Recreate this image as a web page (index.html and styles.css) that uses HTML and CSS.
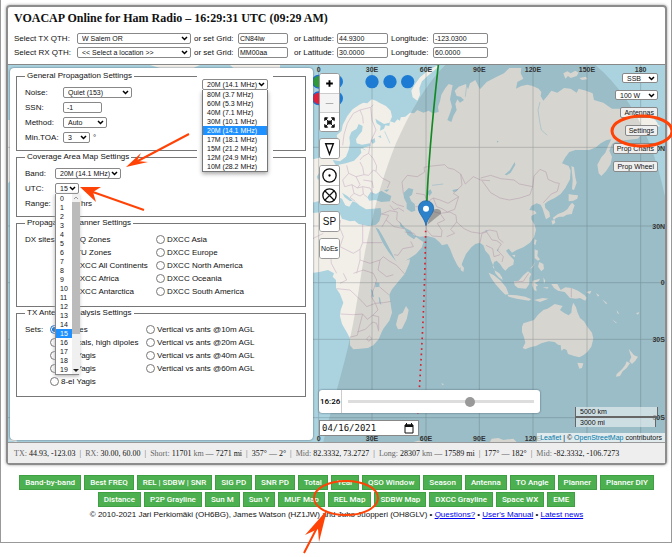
FILE: index.html
```html
<!DOCTYPE html>
<html lang="en">
<head>
<meta charset="utf-8">
<title>VOACAP Online for Ham Radio</title>
<link rel="stylesheet" href="styles.css">
</head>
<body>
<div class="page">
  <main class="window">
    <header class="head">
      <h1>VOACAP Online for Ham Radio – 16:29:31 UTC (09:29 AM)</h1>
      <form class="sites">
        <label for="tx">Select TX QTH:</label>
        <select id="tx"><option>W Salem OR</option></select>
        <label for="txg">or set Grid:</label>
        <input id="txg" value="CN84lw">
        <label class="end" for="txlat">or Latitude:</label>
        <input id="txlat" value="44.9300">
        <label for="txlon">Longitude:</label>
        <input id="txlon" value="-123.0300">
        <label for="rx">Select RX QTH:</label>
        <select id="rx"><option>&lt;&lt; Select a location &gt;&gt;</option></select>
        <label for="rxg">or set Grid:</label>
        <input id="rxg" value="MM00aa">
        <label class="end" for="rxlat">or Latitude:</label>
        <input id="rxlat" value="30.0000">
        <label for="rxlon">Longitude:</label>
        <input id="rxlon" value="60.0000">
      </form>
    </header>

    <section class="stage">
      <svg class="map" viewBox="-906 15 1971 1131" preserveAspectRatio="xMaxYMin slice" aria-hidden="true">
        <rect x="-906" y="15" width="1971" height="1131" fill="#aad3df"/>
        <!-- land -->
        <g fill="#f2efe9">
          <path d="M0 430V300L40 290 62 270 66 255 84 240 80 226 95 212 98 195 112 168 128 148 148 134 160 128 172 130 185 118 198 122 208 128 228 138 242 152 246 170 238 188 222 192 208 184 196 176 200 190 212 198 210 212 222 206 226 196 238 198 240 184 254 188 262 178 270 182 272 172 286 170 300 158 312 160 322 150 340 158 356 152 368 160 386 156 384 140 390 124 394 104 406 84 416 72 428 76 424 96 420 118 426 140 420 160 412 180 424 186 430 168 440 150 436 132 442 118 450 128 462 120 452 110 440 108 434 92 446 80 468 72 474 88 480 70 496 60 510 88 530 66 560 50 582 40 598 24 634 24 632 40 640 56 622 66 618 86 634 78 652 74 668 78 686 86 694 96 692 108 700 122 712 108 724 92 742 98 762 84 782 86 800 98 806 86 828 92 848 100 852 120 880 128 906 146 950 146 990 160 1036 180 1044 192 1020 204 1026 214 996 220 984 236 950 240 920 244 906 252 898 272 906 290 902 312 888 334 874 348 866 340 862 314 874 292 886 278 894 258 904 238 890 240 872 250 858 262 838 270 796 270 778 276 766 292 756 310 776 318 782 332 780 358 766 384 752 402 734 414 714 424 704 432 706 444 718 456 720 470 708 478 702 460 698 446 692 434 680 430 664 438 658 450 674 452 680 460 664 468 664 478 674 494 678 510 672 532 660 548 640 562 620 570 606 578 596 566 588 572 598 586 612 600 610 614 596 622 586 632 578 624 570 612 560 602 552 606 548 620 556 632 568 640 576 652 578 660 566 652 556 640 552 622 544 604 538 586 526 572 520 556 510 548 496 552 484 562 468 582 460 600 450 626 442 616 430 592 420 566 412 552 396 556 388 546 374 534 352 528 330 530 312 526 302 512 286 504 276 494 268 484 272 500 284 508 290 518 292 524 312 538 318 530 326 536 340 546 336 562 318 582 300 594 280 606 264 612 256 600 244 576 230 550 216 524 206 508 196 502 206 522 218 548 234 574 248 592 260 606 280 604 300 598 298 610 284 642 262 668 246 688 238 704 242 732 246 758 238 782 220 806 214 818 206 838 190 856 174 864 150 866 130 868 120 856 120 836 112 820 96 792 90 768 92 750 100 728 90 702 78 684 78 660 68 650 72 640 54 630 28 636 0 640V460L40 456 70 464 90 462 96 476 120 484 134 482 146 492 176 498 198 494 208 484 214 462 212 444 190 446 168 448 148 436 140 428 128 424 118 440 106 436 96 416 80 410 60 405 40 420Z"/>
          <path d="M308 112 304 92 314 74 330 52 352 34 378 18 388 18 370 34 350 50 336 64 328 84 330 104 322 122Z"/>
          <path d="M760 40 772 34 782 40 796 32 806 38 800 48 782 54 774 48 766 56ZM808 54 828 50 832 58 816 60Z"/>
          <path d="M784 318 792 322 796 352 800 368 792 390 786 388 788 360ZM776 402 788 404 804 406 802 416 790 422 776 424ZM786 428 794 436 788 452 786 462 770 464 760 470 748 470 738 474 732 480 728 474 744 462 760 456 772 448 778 438ZM724 482 734 480 736 488 728 494ZM674 538 680 540 676 556 672 552ZM606 586 616 584 614 592Z"/>
          <path d="M674 568 684 572 682 588 690 598 684 602 674 594ZM688 606 700 612 702 626 694 634 684 620ZM676 606 668 622 660 628ZM288 738 296 750 290 778 276 806 264 808 258 794 262 778 266 764 278 758ZM452 610 462 624 460 636 452 630Z"/>
          <path d="M536 638 552 646 572 662 588 682 596 702 586 704 574 692 556 672 542 652ZM592 704 620 706 646 710 664 718 656 722 620 716 596 710ZM612 664 626 662 640 646 654 634 664 642 658 654 658 672 648 686 624 684 614 676ZM668 662 690 656 686 664 674 668 684 676 678 680 680 694 672 690 666 676ZM672 720 698 714 716 716 690 726ZM700 652 706 662 702 672ZM698 682 716 682 712 686Z"/>
          <path d="M724 672 742 672 752 690 766 682 784 684 804 692 824 706 830 714 826 722 810 714 798 716 780 714 764 696 744 692 732 684ZM828 696 844 692 840 702ZM858 700 868 706 864 710ZM876 718 892 730 888 732ZM906 778 922 790 916 788ZM920 750 928 762 922 760ZM978 760 988 756 984 764Z"/>
          <path d="M636 800 640 790 672 780 684 764 700 750 712 746 722 740 734 732 758 738 750 750 764 760 776 766 784 758 786 740 790 728 798 742 802 756 810 774 822 784 832 800 846 818 850 836 844 860 832 876 820 886 808 892 792 888 774 882 770 870 762 866 754 872 752 856 744 854 734 846 716 844 694 850 678 858 660 862 646 868 638 864 646 848 642 832 636 816ZM802 908 820 910 816 924 808 926ZM956 866 966 878 972 886 984 890 976 902 966 912 958 904 964 892 960 880ZM950 904 960 910 950 924 938 934 930 948 918 950 920 942 936 928 946 914Z"/>
          <path d="M394 970 402 972 398 976ZM310 1146 325 1142 345 1146ZM540 1146 545 1136 565 1134 580 1140 610 1136 620 1146ZM-906 1140 -880 1136V1146Z"/>
          <path d="M-906 180H-896V360L-906 370ZM-906 70H-600L-700 80ZM-480 15H-330L-350 24H-450ZM-240 15H-90V24H-230ZM1036 190 1052 198 1038 202Z"/>
        </g>
        <!-- inland water -->
        <g fill="#aad3df">
          <path d="M68 300 90 304 108 290 116 270 120 250 118 232 124 216 140 206 146 192 158 198 156 214 146 226 138 238 140 250 156 254 180 250 182 258 164 262 152 266 154 278 144 290 132 302 108 310 86 314 90 330 80 320Z"/>
          <path d="M182 242 194 234 196 246 188 252ZM204 230 212 226 214 234ZM172 412 182 396 198 402 214 392 224 398 244 408 240 424 214 426 196 420 178 422ZM222 390 238 388 230 396ZM280 400 296 384 310 388 306 404 298 410 304 424 314 432 316 452 304 456 290 446 290 430 282 414ZM350 396 362 388 366 398 358 408ZM427 390 446 386 440 394 430 396Z"/>
          <path d="M584 344 600 330 614 306 616 314 602 338 590 346ZM196 668 208 668 208 680 196 682ZM182 686 188 692 192 712 187 710ZM206 710 210 714 214 736 208 728ZM560 570 568 568 562 574ZM526 510 534 512 528 516ZM560 242 566 244 562 248Z"/>
          <path d="M20 350 28 338 38 346 24 360ZM96 398 112 408 128 422 120 424 104 412Z"/>
        </g>
        <g fill="none" stroke="#aad3df" stroke-width="2">
          <path d="M690 126 684 150 690 190 694 210 712 226M148 260 166 270M366 376 400 372M224 214 240 250M470 76 466 110"/>
        </g>
        <!-- borders -->
        <g fill="none" stroke="#bfa3bd" stroke-width="2" opacity=".7">
          <path d="M98 256 102 224 112 190 130 160 150 150 158 170 160 190M150 150 182 142 190 134M182 142 186 180 198 210 184 240 180 256 176 280 190 296 200 318 198 334 216 354 240 366 232 384M176 280 158 290 150 300M110 316 116 340 138 350 162 344 158 322 150 306M162 344 176 346 190 330 198 334M116 340 98 360 104 380 126 374 142 384 150 374 138 350M142 384 158 380 180 384 190 404M158 380 160 402 172 412M126 374 132 400 150 408 160 402M132 400 120 412 136 424M190 384 186 364 160 360"/>
          <path d="M280 400 276 366 292 346 322 350 344 336 342 322 366 318 404 314 414 324 432 328 452 342 466 372 490 350 512 360 540 362M452 342 456 376 430 400 446 410 414 430 390 420 370 414 352 426 344 404 318 400M370 414 380 440 396 446 412 456 434 448 446 410M316 440 336 440 360 452 390 460 404 480 382 490 396 512 394 530 366 528M346 480 350 510 366 528M390 460 420 456 438 466 440 486 422 508 434 520 410 530M440 486 462 506 484 516 512 520 538 510 560 514 566 536 580 548"/>
          <path d="M512 354 542 346 572 356 612 360 628 372 668 380 660 404 630 414 598 420 570 414 542 398 516 362M668 380 672 348 690 328 708 336 714 358 736 368 748 370 742 394 724 402 700 428M246 424 262 434 282 440M240 436 252 450 266 444 282 454M214 462 240 452 262 456 260 480 276 494M214 462 236 466 228 480 216 500M228 480 252 500 282 506M284 516 312 520 318 530M302 544 310 560 278 566 264 586 252 584"/>
          <path d="M158 492V548H216M158 548 150 568V600L140 640M92 480 88 500 100 530 90 560 130 580 150 568M90 560 50 580M0 540 40 520M150 600 180 610 210 600 220 590 236 602 260 616 284 642M210 600 204 630 230 650 250 644M130 640 160 630 190 640 200 660 190 690 184 710 196 730 170 740 156 724 120 690 80 686M100 640 110 660 90 670M60 560 64 610 80 640M208 680 236 704M196 730 220 728 244 724M92 762 130 764 158 762 172 778 188 766 204 750 196 730M158 762 148 800 142 826 118 832M142 816 166 808 188 786 200 790 206 814M170 836 178 828 186 836 176 844 170 836M188 766 206 770 206 810M510 548 516 520 530 516 546 540 560 542 574 552 562 570 580 590 576 606M528 556 548 566 552 590 570 584M784 684V712M614 666 640 664 656 640"/>
        </g>
        <!-- night side -->
        <path d="M406 15C350 70 300 155 258 250 210 370 196 440 168 560 150 650 140 760 112 870 90 960 60 1060 40 1146H1065V410C1040 290 990 130 856 15Z" fill="#3c3c3c" opacity=".14"/>
        <!-- graticule -->
        <g stroke="#435057" stroke-width="2" opacity=".36">
          <path d="M26 15V1146M186 15V1146M348 15V1146M508 15V1146M669 15V1146M831 15V1146M992 15V1146M-906 262H1065M-906 498H1065M-906 668H1065M-906 838H1065M-906 1073H1065"/>
        </g>
        <g class="degrees">
          <text x="26" y="36">0</text><text x="186" y="36">30E</text><text x="348" y="36">60E</text><text x="508" y="36">90E</text><text x="669" y="36">120E</text><text x="831" y="36">150E</text><text x="992" y="36">180</text>
          <text x="26" y="1143">0</text><text x="186" y="1143">30E</text><text x="348" y="1143">60E</text><text x="508" y="1143">90E</text><text x="669" y="1143">120E</text>
          <text x="1046" y="272">60N</text><text x="1046" y="506">30N</text><text x="1058" y="676">0</text><text x="1046" y="846">30S</text><text x="1046" y="1081">60S</text>
        </g>
        <!-- propagation markers -->
        <g fill="#1e7bd4">
          <circle cx="186" cy="65" r="20"/><circle cx="240" cy="65" r="20"/><circle cx="293" cy="65" r="20"/>
          <circle cx="78" cy="65" r="21"/><circle cx="78" cy="115" r="21"/>
        </g>
        <g stroke="#1e6fd0" stroke-width="4"><circle cx="26" cy="65" r="19" fill="#2f9a3c"/><circle cx="26" cy="115" r="19" fill="#e2203c"/></g>
        <!-- short and long path -->
        <path d="M385 15C370 150 355 300 350 440" fill="none" stroke="#118a22" stroke-width="5"/>
        <path d="M347 512C344 720 334 900 323 1066" fill="none" stroke="#d9202c" stroke-width="5" stroke-dasharray="5 11"/>
        <path d="M352 494 392 462C398 448 380 444 366 450Z" fill="#333" opacity=".35"/>
        <path d="M348 497C342 470 325 462 325 444A23 22 0 0 1 371 444C371 462 354 470 348 497Z" fill="#2b82cb" stroke="#1a5f9e" stroke-width="2"/>
        <circle cx="348" cy="446" r="9" fill="#fff"/>
      </svg>

      <form class="panel">
        <fieldset>
          <legend>General Propagation Settings</legend>
          <div class="row wide"><label for="noise">Noise:</label><select id="noise" class="w-noise"><option>Quiet (153)</option></select></div>
          <div class="row wide"><label for="ssn">SSN:</label><input id="ssn" class="w-ssn" value="-1"></div>
          <div class="row wide"><label for="method">Method:</label><select id="method" class="w-method"><option>Auto</option></select></div>
          <div class="row wide"><label for="toa">Min.TOA:</label><select id="toa" class="w-toa"><option>3</option></select><span>°</span></div>
        </fieldset>
        <fieldset>
          <legend>Coverage Area Map Settings</legend>
          <div class="row"><label for="band">Band:</label><select id="band" class="w-band"><option>20M (14.1 MHz)</option></select></div>
          <div class="row"><label for="utc">UTC:</label>
            <div class="anchor"><select id="utc" class="w-utc"><option>15</option></select>
              <div class="hours">
                <ul class="options" role="listbox" aria-label="UTC hour">
                  <li>0</li><li>1</li><li>2</li><li>3</li><li>4</li><li>5</li><li>6</li><li>7</li><li>8</li><li>9</li><li>10</li><li>11</li><li>12</li><li>13</li><li>14</li><li class="on">15</li><li>16</li><li>17</li><li>18</li><li>19</li>
                </ul>
                <div class="bar"><svg viewBox="0 0 8 8"><path d="M2 5 4 3 6 5" fill="none" stroke="#999"/></svg><i></i><svg viewBox="0 0 8 8"><path d="M1 3H7L4 6Z" fill="#222"/></svg></div>
              </div>
            </div>
          </div>
          <div class="row"><span class="name">Range:</span><span class="unit">hrs</span></div>
        </fieldset>
        <fieldset>
          <legend>Propagation Planner Settings</legend>
          <div class="radios dx">
            <span>DX sites:</span>
            <div class="col">
              <label><input type="radio" name="dx">CQ Zones</label>
              <label><input type="radio" name="dx">ITU Zones</label>
              <label><input type="radio" name="dx">DXCC All Continents</label>
              <label><input type="radio" name="dx">DXCC Africa</label>
              <label><input type="radio" name="dx">DXCC Antarctica</label>
            </div>
            <div class="col">
              <label><input type="radio" name="dx">DXCC Asia</label>
              <label><input type="radio" name="dx">DXCC Europe</label>
              <label><input type="radio" name="dx">DXCC North America</label>
              <label><input type="radio" name="dx">DXCC Oceania</label>
              <label><input type="radio" name="dx">DXCC South America</label>
            </div>
          </div>
        </fieldset>
        <fieldset>
          <legend>TX Antenna Analysis Settings</legend>
          <div class="radios sets">
            <span>Sets:</span>
            <div class="col">
              <label><input type="radio" name="set" checked>Dipoles</label>
              <label><input type="radio" name="set">Verticals, high dipoles</label>
              <label><input type="radio" name="set">3-el Yagis</label>
              <label><input type="radio" name="set">5-el Yagis</label>
              <label><input type="radio" name="set">8-el Yagis</label>
            </div>
            <div class="col">
              <label><input type="radio" name="set">Vertical vs ants @10m AGL</label>
              <label><input type="radio" name="set">Vertical vs ants @20m AGL</label>
              <label><input type="radio" name="set">Vertical vs ants @40m AGL</label>
              <label><input type="radio" name="set">Vertical vs ants @60m AGL</label>
            </div>
          </div>
        </fieldset>
        <div class="bands">
          <select aria-label="Band list" class="w-band"><option>20M (14.1 MHz)</option></select>
          <ul class="options" role="listbox" aria-label="Bands">
            <li>80M (3.7 MHz)</li><li>60M (5.3 MHz)</li><li>40M (7.1 MHz)</li><li>30M (10.1 MHz)</li><li class="on">20M (14.1 MHz)</li><li>17M (18.1 MHz)</li><li>15M (21.2 MHz)</li><li>12M (24.9 MHz)</li><li>10M (28.2 MHz)</li>
          </ul>
        </div>
      </form>

      <div class="view">
        <div class="tools">
          <div class="group">
            <button aria-label="Zoom in"><svg viewBox="0 0 20 20"><path d="M10 6.500V13.500M6.500 10H13.500" stroke="#000" stroke-width="2"/></svg></button>
            <button class="off" aria-label="Zoom out"><svg viewBox="0 0 20 20"><path d="M6 10H14" stroke="#aaa" stroke-width="1"/></svg></button>
            <button aria-label="Full screen"><svg viewBox="0 0 20 20"><path d="M5 5H8L5 8ZM15 5V8L12 5ZM5 15V12L8 15ZM15 15H12L15 12Z" fill="#111" stroke="#111"/><rect x="7.500" y="8" width="5" height="4" fill="#111"/><path d="M6 6 14 14M14 6 6 14" stroke="#111"/></svg></button>
          </div>
          <div class="group"><button aria-label="Beam"><svg viewBox="0 0 20 20"><path d="M6 5H14L10 16Z" fill="none" stroke="#111" stroke-width="1.500"/></svg></button></div>
          <div class="group">
            <button aria-label="Centre"><svg viewBox="0 0 20 20"><circle cx="10" cy="10" r="7" fill="none" stroke="#111" stroke-width="1.400"/><circle cx="10" cy="10" r="1.200"/></svg></button>
            <button aria-label="Antipode"><svg viewBox="0 0 20 20"><circle cx="10" cy="10" r="7" fill="none" stroke="#111" stroke-width="1.400"/><path d="M5 5 15 15M15 5 5 15" stroke="#111" stroke-width="1.300"/></svg></button>
          </div>
          <div class="group"><button class="sp">SP</button></div>
          <div class="group"><button class="es">NoEs</button></div>
        </div>
        <div class="side">
          <select aria-label="Mode" class="w-mode"><option>SSB</option></select>
          <select aria-label="Power" class="w-power"><option>100 W</option></select>
          <button>Antennas</button>
          <button>Settings</button>
          <button>Prop Charts</button>
          <button>Prop Wheel</button>
        </div>
        <div class="lower">
          <div class="time"><label for="clock">16:26</label><input id="clock" type="range" min="0" max="24" step="1" value="16"></div>
          <div class="date"><input aria-label="Date" value="04/16/2021"><svg viewBox="0 0 10 11"><path d="M1 2H9V10H1Z" fill="none" stroke="#111"/><path d="M1 1.500H9V4H1Z" fill="#111"/><path d="M2.500 0V2M7.500 0V2" stroke="#111"/></svg></div>
        </div>
        <div class="scale"><span>5000 km</span><span>3000 mi</span></div>
        <div class="credit"><a href="#">Leaflet</a> | © <a href="#">OpenStreetMap</a> contributors</div>
      </div>
    </section>

    <footer class="status">
      <span>TX: <b>44.93, -123.03</b></span><i>|</i><span>RX: <b>30.00, 60.00</b></span><i>|</i><span>Short: <b>11701</b> km — <b>7271 mi</b></span><i>|</i><span><b>357°</b> — <b>2°</b></span><i>|</i><span>Mid: <b>82.3332, 73.2727</b></span><i>|</i><span>Long: <b>28307</b> km — <b>17589 mi</b></span><i>|</i><span><b>177°</b> — <b>182°</b></span><i>|</i><span>Mid: <b>-82.3332, -106.7273</b></span>
    </footer>
  </main>

  <nav class="links">
    <div><button>Band-by-band</button><button>Best FREQ</button><button>REL | SDBW | SNR</button><button>SIG PD</button><button>SNR PD</button><button>Total</button><button>Year</button><button>QSO Window</button><button>Season</button><button>Antenna</button><button>TO Angle</button><button>Planner</button><button>Planner DIY</button></div>
    <div><button>Distance</button><button>P2P Grayline</button><button>Sun M</button><button>Sun Y</button><button>MUF Map</button><button>REL Map</button><button>SDBW Map</button><button>DXCC Grayline</button><button>Space WX</button><button>EME</button></div>
  </nav>
  <p class="copy">© 2010-2021 Jari Perkiomäki (OH6BG), James Watson (HZ1JW) and Juho Juopperi (OH8GLV) • <a href="#">Questions?</a> • <a href="#">User's Manual</a> • <a href="#">Latest news</a></p>
</div>

<svg class="marks" width="672" height="557" viewBox="0 0 672 557" aria-hidden="true">
  <g fill="none" stroke="#ff4306" stroke-width="2">
    <path d="M189 134 134 163M144 210 90 191M304 553 322 518"/>
    <ellipse cx="642" cy="131" rx="30" ry="15" stroke-width="3"/>
    <ellipse cx="346" cy="498" rx="32" ry="17"/>
  </g>
  <path d="M126 167 141 153 137 161 148 162ZM80 187 101 187 93 192 96 202ZM327 510 305 535 318 529 319 542Z" fill="#ff4306"/>
</svg>
</body>
</html>
```

FILE: styles.css
```css
* { box-sizing: border-box; }

body {
  margin: 0;
  background: #fff;
  color: #111;
  font: 8px/13px "Liberation Sans", Arial, sans-serif;
}

button, input, select { font: inherit; color: inherit; margin: 0; }

.page {
  padding: 5px 4px 0 5px;
  height: 543px;
  border: solid #999;
  border-width: 0 1px 1px 1px;
}

.window {
  border: 2px solid #8c8c8c;
  border-radius: 4px;
  box-shadow: 0 0 3px #999;
}

/* header */
.head { padding: 3px 6px 6px 6px; }

h1 {
  margin: 0 0 7px;
  font: bold 12px/16px "Liberation Serif", serif;
  color: #111;
}

.sites {
  display: grid;
  grid-template-columns: 60px 114px 41px 50px 43px 51px 39px 55px;
  gap: 3px;
  align-items: center;
  white-space: nowrap;
  line-height: 11px;
}

.end { text-align: right; }

select, input {
  height: 11px;
  padding: 0 3px;
  border: 1px solid #888;
  border-radius: 2px;
  background: #fff;
  font-size: 7px;
  line-height: 9px;
}

select {
  appearance: none;
  padding: 0 9px 0 4px;
  background: #fff url("data:image/svg+xml,%3Csvg xmlns='http://www.w3.org/2000/svg' viewBox='0 0 7 5'%3E%3Cpath d='M1 1l2.500 2.500L6 1' fill='none' stroke='%23000' stroke-width='1.500'/%3E%3C/svg%3E") no-repeat right 2px center / 7px 5px;
}

.sites input { padding: 0 1px; width: 100%; }

/* map stage */
.stage {
  position: relative;
  display: grid;
  grid-template-columns: 303px 1fr;
  height: 378px;
  padding: 3px 0 2px 2px;
  border-top: 1px solid #888;
  overflow: hidden;
}

.map { position: absolute; inset: 0; width: 100%; height: 100%; }

.degrees {
  font: bold 21px "Liberation Sans", sans-serif;
  fill: #333;
  text-anchor: middle;
}

.panel {
  position: relative;
  display: flex;
  flex-direction: column;
  gap: 1px;
  padding: 3px 7px 0 6px;
  background: #fff;
  border-radius: 4px;
  box-shadow: 0 0 2px #456;
}

fieldset {
  margin: 0;
  min-width: 0;
  padding: 4px 8px 5px;
  border: 1px solid #777;
}

legend { padding: 0 2px; line-height: 10px; }

.row { display: grid; grid-template-columns: 27px auto 1fr; gap: 3px; height: 15px; align-items: center; justify-items: start; }
.wide { grid-template-columns: 35px auto 1fr; }

.w-noise { width: 69px; }
.w-ssn { width: 39px; }
.w-method { width: 44px; }
.w-toa { width: 27px; }
.w-band { width: 66px; }
.w-utc { width: 24px; }
.w-mode { width: 36px; }
.w-power { width: 43px; }
.unit { padding-left: 26px; }

.anchor { position: relative; display: flex; }

.options { margin: 0; padding: 0; list-style: none; font-size: 7px; line-height: 9px; color: #111; }
.options li { padding: 0 4px; }
.options .on { background: #1e90ff; color: #fff; }

.hours {
  position: absolute;
  z-index: 2;
  top: 11px;
  left: 0;
  display: flex;
  width: 24px;
  border: 1px solid #888;
  border-top: 0;
  background: #fff;
  box-shadow: 0 1px 4px #aaa;
}
.hours .options { flex: 1; }
.bar { display: flex; flex-direction: column; width: 8px; background: #f0f0f0; }
.bar svg { width: 8px; height: 8px; }
.bar i { height: 132px; margin-bottom: auto; background: #bbb; }

.bands {
  position: absolute;
  top: 4px;
  left: 187px;
  padding: 7px 5px;
  background: #fff;
}
.bands select, .bands ul { display: block; }
.bands .options { border: 1px solid #777; border-top: 0; background: #fff; box-shadow: 0 2px 4px #aaa; }

.radios { display: grid; margin: 1px 0 3px; white-space: nowrap; }
.dx { grid-template-columns: 38px 93px auto; }
.sets { grid-template-columns: 25px 96px auto; }
.col { display: grid; grid-auto-rows: 13px; align-content: start; }
.col label { display: flex; align-items: center; gap: 2px; }
.col input {
  appearance: none;
  width: 9px;
  height: 9px;
  padding: 0;
  border: 1px solid #777;
  border-radius: 50%;
}
.col input:checked { border-color: #0b6cd8; background: radial-gradient(#0b6cd8 2px, #fff 3px); }

/* map overlays */
.view { position: relative; display: flex; justify-content: space-between; padding: 5px 7px 0 6px; }

.tools { display: flex; flex-direction: column; gap: 6px; }
.group {
  display: flex;
  flex-direction: column;
  width: 21px;
  border: 1px solid #999;
  border-radius: 3px;
  background: #fff;
  overflow: hidden;
}
.group button {
  display: grid;
  place-items: center;
  height: 19px;
  padding: 0;
  border: 0;
  background: #fff;
}
.group button + button { border-top: 1px solid #ccc; }
.group svg { width: 19px; height: 19px; }
.group .off { background: #f4f4f4; }
.group .sp { font-size: 10px; }
.group .es { font-size: 7px; }

.side { display: flex; flex-direction: column; align-items: flex-end; gap: 7px; }
.side button {
  height: 11px;
  padding: 0 3px;
  border: 1px solid #888;
  border-radius: 2px;
  background: #efefef;
  font-size: 7px;
  line-height: 9px;
}
.side select { height: 10px; }

.lower { position: absolute; left: 6px; bottom: 4px; display: grid; gap: 7px; }
.time {
  display: flex;
  align-items: center;
  width: 221px;
  height: 23px;
  padding: 0 6px 0 1px;
  border-radius: 3px;
  background: #fff;
  box-shadow: 0 0 2px #456;
}
.time label { width: 22px; height: 23px; border-right: 1px solid #ccc; font: 500 8px/23px Roboto, sans-serif; color: #000; }
.time input { appearance: none; flex: 1; height: 10px; margin-left: 6px; padding: 0; border: 0; background: linear-gradient(#ddd, #ddd) center / 100% 3px no-repeat; }
.time input::-webkit-slider-thumb { appearance: none; width: 10px; height: 10px; border-radius: 50%; background: #999; }

.date { display: flex; align-items: center; width: 100px; height: 16px; padding: 0 4px 0 2px; border: 1px solid #888; background: #fff; }
.date input { flex: 1; min-width: 0; padding: 0; border: 0; font: 9px/12px "DejaVu Sans Mono", monospace; }
.date svg { width: 10px; height: 11px; }

.scale { position: absolute; right: 7px; bottom: 13px; width: 83px; font-size: 7px; line-height: 9px; }
.scale span { display: block; height: 10px; padding-left: 4px; border: 1px solid #666; border-top: 0; background: #ffffff80; }
.scale span + span { width: 81px; border: 1px solid #666; border-bottom: 0; }

.credit { position: absolute; right: 0; bottom: -2px; padding: 0 3px; background: #ffffffb3; font-size: 7px; line-height: 9px; white-space: nowrap; }
.credit a { color: #0078a8; text-decoration: none; }

/* status line */
.status {
  display: flex;
  gap: 4px;
  padding: 4px 6px 2px;
  border-top: 1px solid #999;
  background: #eee;
  font: 8px/14px "Liberation Serif", serif;
  color: #666;
  white-space: nowrap;
}
.status b { font-weight: normal; color: #111; }
.status i { font-style: normal; }

.links { display: grid; gap: 2px; margin-top: 10px; }
.links div { display: flex; justify-content: center; gap: 3px; }
.links button {
  height: 15px;
  padding: 0 5px;
  border: 1px solid #3fa043;
  background: #4caf50;
  color: #fff;
  font: 500 8px/13px Roboto, sans-serif;
  white-space: nowrap;
}

.copy { margin: 1px 0 0; text-align: center; color: #111; white-space: nowrap; }
.copy a { color: #00e; }

.marks { position: absolute; top: 0; left: 0; pointer-events: none; }
```
